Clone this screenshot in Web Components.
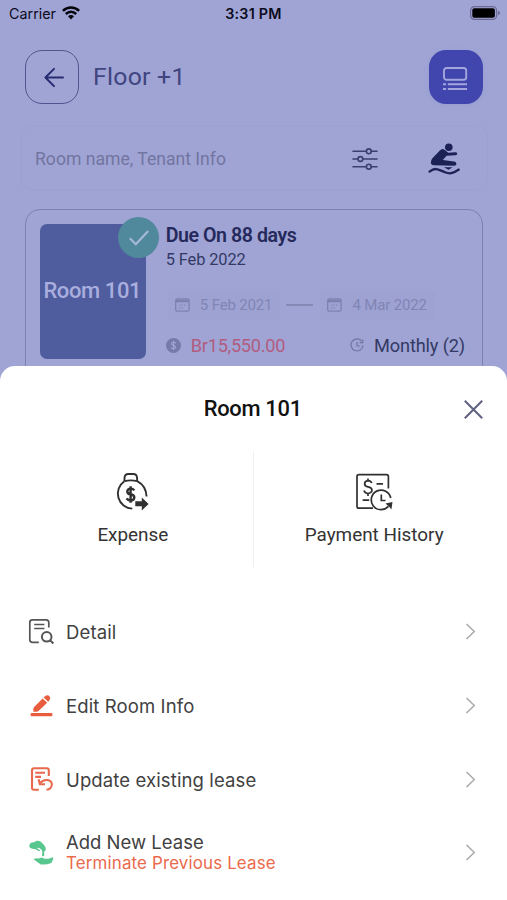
<!DOCTYPE html>
<html lang="en">
<head>
<meta charset="utf-8">
<title>Room 101</title>
<style>
  html, body { margin: 0; height: 900px; overflow: hidden; background: #9fa4d5; }
</style>
</head>
<body>
<room-app></room-app>
<script>
const define = (name, css, html) => customElements.define(name, class extends HTMLElement {
  constructor() {
    super();
    this.attachShadow({ mode: 'open' }).innerHTML =
      `<style>*{box-sizing:border-box}svg{display:block;overflow:visible;flex:none}${css}</style>${html}`;
  }
});

define('status-bar', `
  :host{display:grid;grid-template-columns:1fr auto 1fr;align-items:center;height:28px;padding:0 7px 0 9px;
    color:#0b0b1c;font:14.3px/18px Inter,"Liberation Sans",sans-serif}
  .l{display:flex;align-items:center;gap:7px;letter-spacing:.02px}
  .t{font-weight:600;letter-spacing:.25px;margin-right:2px}
  .b{justify-self:end;margin-top:-2px}`, `
  <div class="l"><span>Carrier</span>
    <svg width="18" height="14" viewBox="0 0 18 14" fill="none" stroke="#05050c" stroke-width="2.5" style="margin:-3px 0 0 -1px">
      <path d="M.9 4.9C5.5.4 12.5.4 17.1 4.9"/><path d="M3.8 8C7 5 11 5 14.2 8"/>
      <path d="M6 10.2C7.8 8.6 10.2 8.6 12 10.2L9 13.4Z" fill="#05050c" stroke="none"/></svg></div>
  <div class="t">3:31 PM</div>
  <svg class="b" width="30" height="14" viewBox="0 0 30 14">
    <rect x=".6" y=".6" width="26" height="12.8" rx="3.8" fill="none" stroke="#6c6a91" stroke-width="1.2"/>
    <rect x="2.3" y="2.3" width="22.6" height="9.4" rx="2" fill="#000"/>
    <path d="M28 4.8Q30 5.6 30 7T28 9.2Z" fill="#6c6a91"/></svg>`);

define('page-header', `
  :host{display:flex;align-items:center;height:54px;margin:22px 24.5px 0 25px;
    font:24.8px/30px Roboto,sans-serif;color:#41457f}
  .back{width:54px;height:54px;border:1.3px solid #51558f;border-radius:17px;display:grid;place-items:center}
  .title{flex:1;padding-left:14px;letter-spacing:.25px;font-weight:400}
  .view{width:54px;height:54px;border-radius:17px;background:#4145ae;display:grid;place-items:center;box-shadow:0 1px 4px #8b90c955}`, `
  <div class="back"><svg width="20" height="20" viewBox="0 0 20 20" fill="none" stroke="#282c70" stroke-width="2" stroke-linecap="round" stroke-linejoin="round" style="margin-left:3px">
    <path d="M19 10.5H1.7M10 1.9 1.4 10.5l8.6 8.6"/></svg></div>
  <div class="title"><slot></slot></div>
  <div class="view"><svg width="24" height="24" viewBox="0 0 24 24" fill="none" stroke="#a2a6dc" stroke-width="1.9" style="margin:3px 0 0 -2px">
    <rect x="1" y="1" width="22.2" height="11.8" rx="2.6"/>
    <path d="M4.8 17.2H24M4.8 22H24M0 17.2H3M0 22H3"/></svg></div>`);

define('search-box', `
  :host{display:flex;align-items:center;height:64px;margin:22px 19px 0 20.5px;padding:2px 27px 0 13.5px;
    border-radius:12px;border:1px solid #989dcd70;box-shadow:0 0 2px #999ece40;
    font:17.6px/24px Roboto,sans-serif}
  .q{flex:1;color:#72759f}
  .f{margin-right:50px}`, `
  <div class="q"><slot></slot></div>
  <svg class="f" width="26" height="22" viewBox="0 0 26 22" fill="none" stroke="#3a3e70" stroke-width="1.6" stroke-linecap="round">
    <path d="M1 3.3h13.3M19.3 3.3H25M1 11H6M11 11h14M1 18.7h13.3M19.3 18.7H25"/>
    <circle cx="16.8" cy="3.3" r="2.4"/><circle cx="8.4" cy="11" r="2.4"/><circle cx="16.8" cy="18.7" r="2.4"/></svg>
  <svg width="32" height="32" viewBox="0 0 32 32" fill="#1c2156" style="margin-top:-1px">
    <circle cx="20.8" cy="4.3" r="3.8"/>
    <path d="M15.8 6.2Q13.8 5.6 11.8 7.6L4 15.8Q1 21.6 5.4 22.3L26.6 22.8Q28.8 22.6 28.4 20.6T26 18.6L14.8 17 18.6 12.8 27.4 12.2Q29.6 11.8 29.2 10.4T27 9.3L20.3 9.7Z"/>
    <path d="M15.8 24.2 24.6 24.2 20.6 26.8Z"/>
    <path d="M1.5 28.6C8 23.6 11 27 17 29.3S26 29.6 30.8 26.6" fill="none" stroke="#1c2156" stroke-width="2.3" stroke-linecap="round"/></svg>`);

define('date-chip', `
  :host{display:flex;align-items:center;height:29px;padding:0 8px 0 7px;gap:10px;border-radius:3px;background:#9b9fce55;
    font:15px/20px Roboto,sans-serif;color:#8085b3;letter-spacing:-.15px}`, `
  <svg width="15" height="14" viewBox="0 0 15 14" fill="none" stroke="#7c81ad" stroke-width="1.3">
    <rect x=".7" y=".9" width="13.4" height="12.3" rx="1.6"/><path d="M.7 3H14" stroke-width="2.6"/>
    <path d="M4 7.2h7M4 10h5" stroke-dasharray="1.5 1" stroke-width="1"/></svg>
  <span><slot></slot></span>`);

define('room-card', `
  :host{display:flex;gap:19.5px;height:260px;margin:19px 24px 0 25.3px;padding:13.5px 16px 0 14px;
    border:1.4px solid #7c80ae;border-radius:15px;font-family:Roboto,sans-serif;color:#343964}
  .tile{position:relative;width:106px;height:135px;border-radius:7px;background:#4f5c9e;display:grid;place-items:center;
    font-weight:500;font-size:22px;color:#a9aede;letter-spacing:-.4px;white-space:nowrap;flex:none;padding:0 2px 2px 0}
  .ok{position:absolute;left:78px;top:-6.5px;width:41px;height:41px;border-radius:50%;background:#51899c;display:grid;place-items:center}
  .info{flex:1;display:flex;flex-direction:column;min-width:0}
  .due{font-size:19.6px;line-height:24px;font-weight:600;color:#26295b;white-space:nowrap;letter-spacing:-.46px}
  .on{font-size:16.4px;line-height:22px;margin-top:1px;letter-spacing:-.12px}
  .dates{display:flex;align-items:center;margin:20px 0 0 2px;}
  .dash{width:27px;height:1.4px;background:#8489b6;margin:0 7px 0 6px}
  .pay{display:flex;align-items:center;margin-top:14px;font-size:18.2px;line-height:24px}
  .amt{color:#b25c80;margin-left:10px;flex:1;letter-spacing:-.28px}
  .per{margin-left:9px;letter-spacing:-.15px;margin-right:1px}`, `
  <div class="tile"><slot name="room"></slot><div class="ok">
    <svg width="20" height="16" viewBox="0 0 20 16" fill="none" stroke="#a5b9d7" stroke-width="2.2"><path d="M.8 8.3 6.8 14.2 19.2 1"/></svg></div></div>
  <div class="info">
    <div class="due"><slot name="due"></slot></div>
    <div class="on"><slot name="on"></slot></div>
    <div class="dates"><date-chip>5 Feb 2021</date-chip><div class="dash"></div><date-chip>4 Mar 2022</date-chip></div>
    <div class="pay">
      <svg width="15" height="15" viewBox="0 0 15 15"><circle cx="7.5" cy="7.5" r="7.5" fill="#757aaa"/>
        <path d="M9.7 5.4Q9 4.2 7.5 4.2 5.5 4.3 5.4 5.8 5.5 7 7.5 7.4 9.7 7.9 9.7 9.2 9.5 10.7 7.5 10.8 5.9 10.8 5.2 9.4M7.5 2.8V12.2" fill="none" stroke="#a0a5d5" stroke-width="1.1"/></svg>
      <span class="amt"><slot name="amount"></slot></span>
      <svg width="15" height="15" viewBox="0 0 15 15" fill="none" stroke="#72769f" stroke-width="1.2">
        <path d="M11.6 3A6 6 0 1 0 13 7.4M7 4V8H10.2M12.8 1.4V4.6H9.6M13.4 9.3V9.5"/></svg>
      <span class="per"><slot name="period"></slot></span>
    </div>
  </div>`);

define('sheet-action', `
  :host{display:flex;flex-direction:column;align-items:center;flex:1;padding-top:21px;
    font:18.9px/24px Roboto,sans-serif;color:#333;letter-spacing:0}
  .label{margin-top:12px}`, `<slot name="icon"></slot><div class="label"><slot></slot></div>`);

define('sheet-row', `
  :host{display:flex;align-items:center;height:74.2px;padding:0 31px 0 28px;
    font:18.5px/22px Inter,"Liberation Sans",sans-serif;color:#414141;letter-spacing:.12px}
  .ic{width:27px;height:27px;flex:none}
  .tx{flex:1;padding-left:11px}
  ::slotted([slot=note]){display:block;color:#eb694c;font-size:16.9px;line-height:20px;letter-spacing:.16px}`, `
  <div class="ic"><slot name="icon"></slot></div>
  <div class="tx"><slot></slot><slot name="note"></slot></div>
  <svg width="10" height="17" viewBox="0 0 10 17" fill="none" stroke="#aaa" stroke-width="1.5"><path d="M.5 1 8.3 8.5.5 16"/></svg>`);

define('bottom-sheet', `
  :host{position:absolute;left:0;right:0;bottom:0;height:534.5px;background:#fff;border-radius:15px 15px 0 0;display:block}
  .head{display:grid;grid-template-columns:1fr auto 1fr;align-items:center;padding:29px 24.5px 0 23px;
    font:500 21.9px/28px Roboto,sans-serif;color:#111;letter-spacing:-.3px}
  .head svg{justify-self:end;margin-top:2px}
  .acts{display:flex;margin:28.5px 0 0;height:116px;padding-left:13px}
  .sep{width:1.6px;background:#f0f0f0}
  .rows{padding-top:27.5px}
  .last{height:70px;letter-spacing:0}`, `
  <div class="head"><i></i><span>Room 101</span>
    <svg width="19" height="19" viewBox="0 0 19 19" fill="none" stroke="#5f6280" stroke-width="2"><path d="M.8.8 18.2 18.2M18.2.8.8 18.2"/></svg></div>
  <div class="acts">
    <sheet-action>
      <svg slot="icon" width="36" height="39" viewBox="1 0 36 39" fill="none" stroke="#303030" stroke-width="1.9">
        <path d="M10.5 9.2V6.2Q10.6 2 14.4 2H19.2Q23 2 23.1 6.2V9.2"/>
        <path d="M10.4 9.2Q16.8 7.5 23.2 9.2"/>
        <path d="M18.3 36.6A15 15 0 0 1 10.4 9.2M23.2 9.2Q31.9 13.7 32.6 24.5"/>
        <path d="M20.3 18.4Q19 16.6 16.7 16.6 13.3 16.8 13.3 19.6 13.5 22 16.5 22.3 20.3 22.8 20.3 25.6 20 28.4 16.7 28.5 13.8 28.4 12.6 26.4M16.6 14.3V30.8" stroke-width="2.4"/>
        <path d="M21.3 29.3H27.8V25.4L34.6 32 27.8 38.4V34.3H21.3Z" fill="#303030" stroke="none"/></svg>
      Expense</sheet-action>
    <div class="sep"></div>
    <sheet-action style="padding-right:13px">
      <svg slot="icon" width="38" height="39" viewBox="0 0 38 39" fill="none" stroke="#303030" stroke-width="1.7">
        <path d="M18 36.2H4Q2 36.2 2 34.2V4.6Q2 2.6 4 2.6H31.4Q33.4 2.6 33.4 4.6V16.5"/>
        <path d="M16.8 11Q15.8 8.6 13 8.6 9.6 8.9 9.6 11.9 9.8 14.4 13 14.9 17 15.6 17 18.5 16.6 21.2 13 21.5 9.8 21.3 9 18.6M13 6.4V8.6M13 21.5V24"/>
        <path d="M21.5 11.8H28M7.6 28.2H14.2M26.3 22.5V28.5H30.5"/>
        <path d="M35.7 26A9.8 9.8 0 1 0 33.4 34.4"/>
        <path d="M30.5 31.4 37.5 30 36.4 37.5 34.6 35.2Z" fill="#303030" stroke="none"/></svg>
      Payment History</sheet-action>
  </div>
  <div class="rows">
    <sheet-row><svg slot="icon" width="27" height="27" viewBox="0 0 27 27" fill="none" stroke="#555" stroke-width="1.7">
      <path d="M10.8 24.3H4.5Q1.8 24.3 1.8 21.7V4.5Q1.8 1.8 4.5 1.8H18Q20.8 1.8 20.8 4.5V9.5"/>
      <path d="M6.2 6.5H16.4M6.2 10.5H16.4"/><circle cx="18.7" cy="18.8" r="4.8" stroke-width="2"/><path d="M22 22.3 25.4 25.5" stroke-width="2"/></svg>Detail</sheet-row>
    <sheet-row><svg slot="icon" width="27" height="27" viewBox="0 0 27 27" fill="#e75d3e">
      <rect x="2.6" y="21" width="21.8" height="3.2" rx="1"/>
      <path d="M5.4 19.7Q4.7 16.6 6.1 15L14.6 6.5 19.2 10.8 10.5 18.9Q8.8 20.1 5.4 19.7ZM15.6 5.5Q19.4 1.6 21.8 4.8 23 7 20.2 9.7Z"/></svg>Edit Room Info</sheet-row>
    <sheet-row><svg slot="icon" width="27" height="27" viewBox="0 0 27 27" fill="none" stroke="#e8694e" stroke-width="2.1">
      <path d="M10.8 23.8H6Q4 23.8 4 21.8V4.3Q4 2.3 6 2.3H18.8Q20.8 2.3 20.8 4.3V9.9"/>
      <path d="M7.2 6.7H17M7.2 10.9H13"/><path d="M12.2 17C15 13.5 22.7 12.3 23.8 17.7 24.2 21.5 21.8 23.5 18.5 23.8"/>
      <path d="M10.6 13.2 11.8 18.2 17 18.3"/></svg>Update existing lease</sheet-row>
    <sheet-row class="last"><svg slot="icon" width="27" height="27" viewBox="0 0 27 27" fill="#57c78d">
      <path d="M1.2 7.2Q1.4 4.4 3.6 3.6L6.2 3.2Q9.5.6 12.8 2.8L15.4 5.2Q18 7.6 17.8 10.6 17.6 12.2 16.2 12.4L16.2 16.6Q15.2 18.2 14 16.6L14.4 12.4Q13.6 10 11.2 9 9.4 8.4 9.2 9.2L12.2 11.6Q11.6 12.6 9.8 11.6L7.6 10.2 4.4 9.8Q1.6 9.2 1.2 7.2Z"/>
      <path d="M5.3 19.9Q8.5 19.2 11 19.4L13.6 18.4 16.6 19.8 20.6 19.8 24.8 18.3Q25.8 19 24.8 21L23.4 24Q17.5 26.2 12.8 25.4L9.6 23.2Z"/></svg>Add New Lease<span slot="note">Terminate Previous Lease</span></sheet-row>
  </div>`);

define('room-app', `
  :host{display:block;position:relative;width:507px;height:900px;overflow:hidden;background:#9fa4d5}`, `
  <status-bar></status-bar>
  <page-header>Floor +1</page-header>
  <search-box>Room name, Tenant Info</search-box>
  <room-card><span slot="room">Room 101</span><span slot="due">Due On 88 days</span><span slot="on">5 Feb 2022</span>
    <span slot="amount">Br15,550.00</span><span slot="period">Monthly (2)</span></room-card>
  <bottom-sheet></bottom-sheet>`);
</script>
</body>
</html>
